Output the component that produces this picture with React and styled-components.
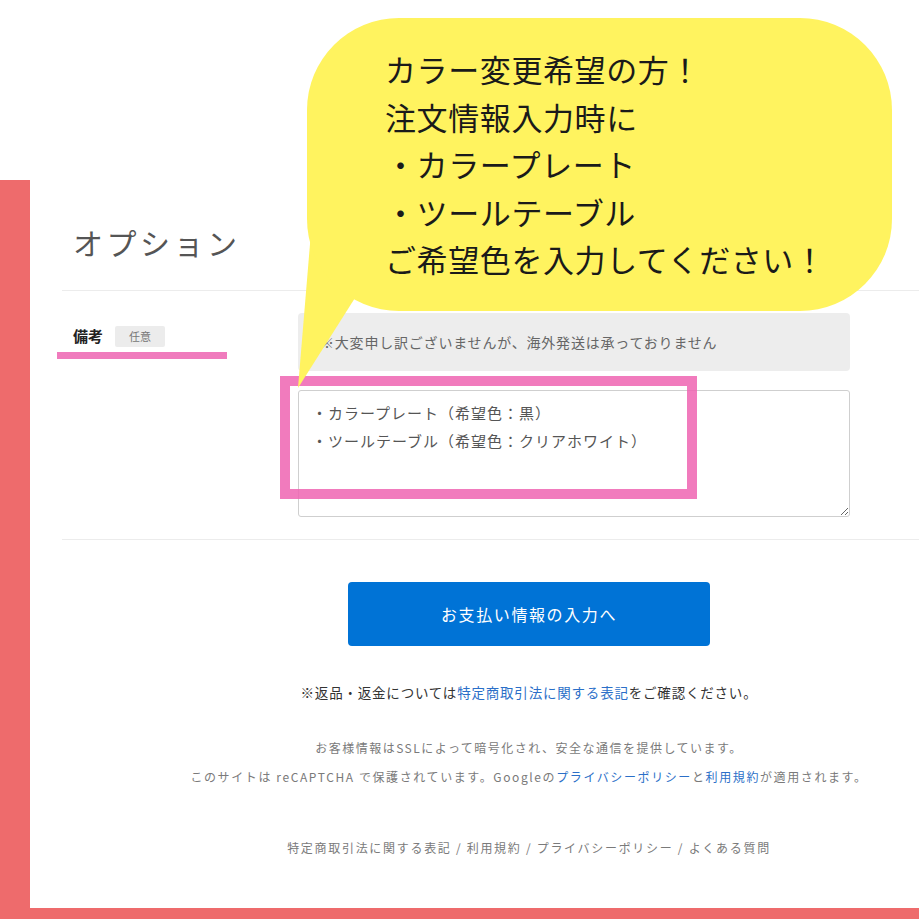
import React from "react";
import styled, { createGlobalStyle } from "styled-components";

const GlobalStyle = createGlobalStyle`
  html, body {
    margin: 0;
    padding: 0;
    background: #fff;
    font-family: "Noto Sans CJK JP", "Noto Sans", sans-serif;
    overflow: hidden;
  }
`;

const Page = styled.div`
  position: relative;
  width: 919px;
  height: 919px;
  overflow: hidden;
  background: #fff;
`;

const Frame = styled.div`
  box-sizing: border-box;
  margin-top: 180px;
  height: 739px;
  border-left: 30px solid #ee6b6c;
  border-bottom: 11px solid #ee6b6c;
`;

const Content = styled.div`
  width: 934px;
  margin-left: 32px;
`;

const TitleBar = styled.div`
  padding: 40px 0 26px 11px;
  border-bottom: 1px solid #ececec;
`;

const Title = styled.h2`
  margin: 0;
  font-size: 30px;
  line-height: 44px;
  font-weight: 400;
  letter-spacing: 3.5px;
  color: #555;
`;

const FormRow = styled.div`
  display: flex;
  padding: 22px 0 22px;
  border-bottom: 1px solid #ececec;
`;

const LabelCol = styled.div`
  width: 236px;
  box-sizing: border-box;
  padding: 13px 0 0 11px;
  display: flex;
  align-items: flex-start;
  gap: 12px;
`;

const Label = styled.span`
  font-size: 15px;
  line-height: 20px;
  font-weight: 700;
  color: #222;
`;

const Badge = styled.span`
  background: #ececec;
  color: #777;
  font-size: 11px;
  line-height: 21px;
  padding: 0 14px;
  border-radius: 2px;
`;

const FieldCol = styled.div`
  width: 552px;
  display: flex;
  flex-direction: column;
  gap: 19px;
`;

const Notice = styled.div`
  background: #ededed;
  border-radius: 4px;
  height: 58px;
  box-sizing: border-box;
  padding: 0 22px;
  display: flex;
  align-items: center;
  font-size: 14px;
  letter-spacing: 0.8px;
  color: #666;
`;

const Remarks = styled.textarea`
  box-sizing: border-box;
  width: 552px;
  height: 127px;
  border: 1px solid #cfcfcf;
  border-radius: 3px;
  padding: 8px 13px;
  font-family: "Noto Sans CJK JP", sans-serif;
  font-size: 15px;
  line-height: 28px;
  letter-spacing: 1px;
  color: #555;
  resize: vertical;
  outline: none;
`;

const Actions = styled.div`
  display: flex;
  flex-direction: column;
  align-items: center;
  padding-top: 42px;
`;

const PayButton = styled.button`
  width: 362px;
  height: 64px;
  border: none;
  border-radius: 4px;
  background: #0073d6;
  color: #fff;
  font-family: "Noto Sans CJK JP", sans-serif;
  font-size: 16px;
  letter-spacing: 1.6px;
  cursor: pointer;
`;

const Note = styled.p`
  margin: 36px 0 0;
  font-size: 13.5px;
  line-height: 20px;
  letter-spacing: 0.8px;
  color: #333;
`;

const Small = styled.p`
  margin: ${({ $top }) => $top}px 0 0;
  font-size: 12px;
  line-height: 18px;
  letter-spacing: ${({ $ls }) => $ls}px;
  color: #7a7a7a;
`;

const Link = styled.a`
  color: #2b6fc8;
  text-decoration: none;
`;

const Bubble = styled.div`
  position: absolute;
  left: 307px;
  top: 18px;
  width: 585px;
  height: 293px;
  box-sizing: border-box;
  padding: 27px 0 0 78px;
  background: #fff35f;
  border-radius: 92px;
  font-size: 31px;
  line-height: 47.5px;
  letter-spacing: 0.6px;
  color: #1a1a1a;
  z-index: 3;
`;

const Tail = styled.svg`
  position: absolute;
  left: 290px;
  top: 220px;
  z-index: 2;
`;

const Underline = styled.div`
  position: absolute;
  left: 57px;
  top: 352px;
  width: 170px;
  height: 7px;
  background: #f07bbd;
`;

const Highlight = styled.div`
  position: absolute;
  left: 280px;
  top: 376px;
  width: 417px;
  height: 123px;
  box-sizing: border-box;
  border: 10px solid rgba(238, 100, 178, 0.85);
  z-index: 1;
`;

export default function App() {
  return (
    <>
      <GlobalStyle />
      <Page>
        <Frame>
          <Content>
            <TitleBar>
              <Title>オプション</Title>
            </TitleBar>
            <FormRow>
              <LabelCol>
                <Label>備考</Label>
                <Badge>任意</Badge>
              </LabelCol>
              <FieldCol>
                <Notice>※大変申し訳ございませんが、海外発送は承っておりません</Notice>
                <Remarks
                  readOnly
                  value={"・カラープレート（希望色：黒）\n・ツールテーブル（希望色：クリアホワイト）"}
                />
              </FieldCol>
            </FormRow>
            <Actions>
              <PayButton>お支払い情報の入力へ</PayButton>
              <Note>
                ※返品・返金については<Link href="#">特定商取引法に関する表記</Link>をご確認ください。
              </Note>
              <Small $top={37} $ls={1.5}>
                お客様情報はSSLによって暗号化され、安全な通信を提供しています。
              </Small>
              <Small $top={11} $ls={1.6}>
                このサイトは reCAPTCHA で保護されています。Googleの
                <Link href="#">プライバシーポリシー</Link>と<Link href="#">利用規約</Link>が適用されます。
              </Small>
              <Small $top={53} $ls={1.7}>
                特定商取引法に関する表記 / 利用規約 / プライバシーポリシー / よくある質問
              </Small>
            </Actions>
          </Content>
        </Frame>

        <Underline />
        <Highlight />
        <Tail width="80" height="170" viewBox="0 0 80 170">
          <polygon points="22,0 70,70 8,168" fill="#fff35f" />
        </Tail>
        <Bubble>
          カラー変更希望の方！
          <br />
          注文情報入力時に
          <br />
          ・カラープレート
          <br />
          ・ツールテーブル
          <br />
          ご希望色を入力してください！
        </Bubble>
      </Page>
    </>
  );
}
